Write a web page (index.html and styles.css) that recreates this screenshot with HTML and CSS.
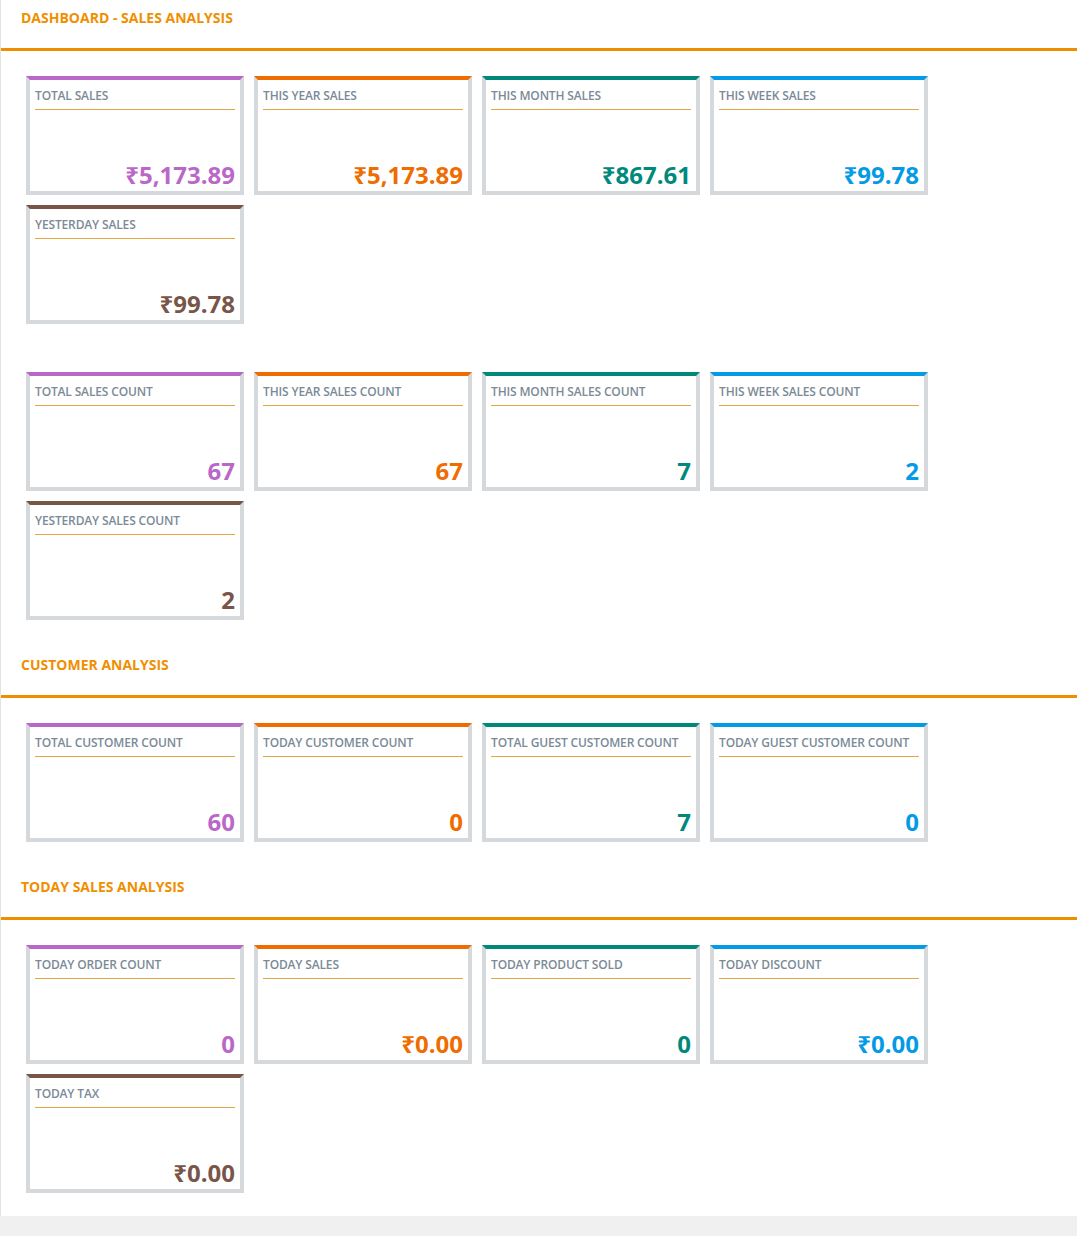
FILE: index.html
```html
<!DOCTYPE html>
<html>
<head>
<meta charset="utf-8">
<title>Dashboard</title>
<link rel="stylesheet" href="styles.css">
</head>
<body>
<div class="page">
  <section class="section">
    <h2 class="section-title">DASHBOARD - SALES ANALYSIS</h2>
    <div class="grid">
      <div class="card c-purple"><div class="card-title">TOTAL SALES</div><div class="card-value">₹5,173.89</div></div>
      <div class="card c-orange"><div class="card-title">THIS YEAR SALES</div><div class="card-value">₹5,173.89</div></div>
      <div class="card c-teal"><div class="card-title">THIS MONTH SALES</div><div class="card-value">₹867.61</div></div>
      <div class="card c-blue"><div class="card-title">THIS WEEK SALES</div><div class="card-value">₹99.78</div></div>
      <div class="card c-brown"><div class="card-title">YESTERDAY SALES</div><div class="card-value">₹99.78</div></div>
    </div>
    <div class="grid">
      <div class="card c-purple"><div class="card-title">TOTAL SALES COUNT</div><div class="card-value">67</div></div>
      <div class="card c-orange"><div class="card-title">THIS YEAR SALES COUNT</div><div class="card-value">67</div></div>
      <div class="card c-teal"><div class="card-title">THIS MONTH SALES COUNT</div><div class="card-value">7</div></div>
      <div class="card c-blue"><div class="card-title">THIS WEEK SALES COUNT</div><div class="card-value">2</div></div>
      <div class="card c-brown"><div class="card-title">YESTERDAY SALES COUNT</div><div class="card-value">2</div></div>
    </div>
  </section>
  <section class="section">
    <h2 class="section-title">CUSTOMER ANALYSIS</h2>
    <div class="grid">
      <div class="card c-purple"><div class="card-title">TOTAL CUSTOMER COUNT</div><div class="card-value">60</div></div>
      <div class="card c-orange"><div class="card-title">TODAY CUSTOMER COUNT</div><div class="card-value">0</div></div>
      <div class="card c-teal"><div class="card-title">TOTAL GUEST CUSTOMER COUNT</div><div class="card-value">7</div></div>
      <div class="card c-blue"><div class="card-title">TODAY GUEST CUSTOMER COUNT</div><div class="card-value">0</div></div>
    </div>
  </section>
  <section class="section">
    <h2 class="section-title">TODAY SALES ANALYSIS</h2>
    <div class="grid">
      <div class="card c-purple"><div class="card-title">TODAY ORDER COUNT</div><div class="card-value">0</div></div>
      <div class="card c-orange"><div class="card-title">TODAY SALES</div><div class="card-value">₹0.00</div></div>
      <div class="card c-teal"><div class="card-title">TODAY PRODUCT SOLD</div><div class="card-value">0</div></div>
      <div class="card c-blue"><div class="card-title">TODAY DISCOUNT</div><div class="card-value">₹0.00</div></div>
      <div class="card c-brown"><div class="card-title">TODAY TAX</div><div class="card-value">₹0.00</div></div>
    </div>
  </section>
</div>
</body>
</html>
```

FILE: styles.css
```css
html, body {
  margin: 0;
  padding: 0;
  background: #f0f0f0;
  font-family: "Open Sans", "Noto Sans", sans-serif;
}

.page {
  background: #ffffff;
  border-left: 1px solid #e3e3e3;
}

.section {
  padding-bottom: 17px;
}

.section:last-child {
  padding-bottom: 13px;
}

.section-title {
  margin: 0;
  height: 48px;
  padding: 0 20px;
  line-height: 36px;
  font-size: 14px;
  font-weight: 700;
  color: #ef8f00;
  border-bottom: 3px solid #ef8f00;
}

.grid {
  display: grid;
  grid-template-columns: repeat(4, 218px);
  column-gap: 10px;
  row-gap: 10px;
  padding-left: 25px;
  margin-top: 25px;
  margin-bottom: 10px;
}

.grid + .grid {
  margin-top: 48px;
}

.card {
  box-sizing: border-box;
  height: 119px;
  border: 4px solid #d6d9dc;
  padding: 0 5px;
  display: flex;
  flex-direction: column;
  background: #fff;
}

.card-title {
  margin-top: 6px;
  padding-bottom: 3px;
  line-height: 20px;
  font-size: 12px;
  font-weight: 600;
  letter-spacing: -0.15px;
  color: #7b8a97;
  border-bottom: 1px solid #e6a443;
  white-space: nowrap;
}

.card-value {
  margin-top: auto;
  padding-bottom: 2px;
  text-align: right;
  font-size: 24px;
  font-weight: 700;
  line-height: 28px;
}

.c-purple { border-top-color: #ba68c8; }
.c-purple .card-value { color: #ba68c8; }
.c-orange { border-top-color: #ef6c00; }
.c-orange .card-value { color: #ef6c00; }
.c-teal { border-top-color: #00897b; }
.c-teal .card-value { color: #00897b; }
.c-blue { border-top-color: #039be5; }
.c-blue .card-value { color: #039be5; }
.c-brown { border-top-color: #795548; }
.c-brown .card-value { color: #795548; }
```
